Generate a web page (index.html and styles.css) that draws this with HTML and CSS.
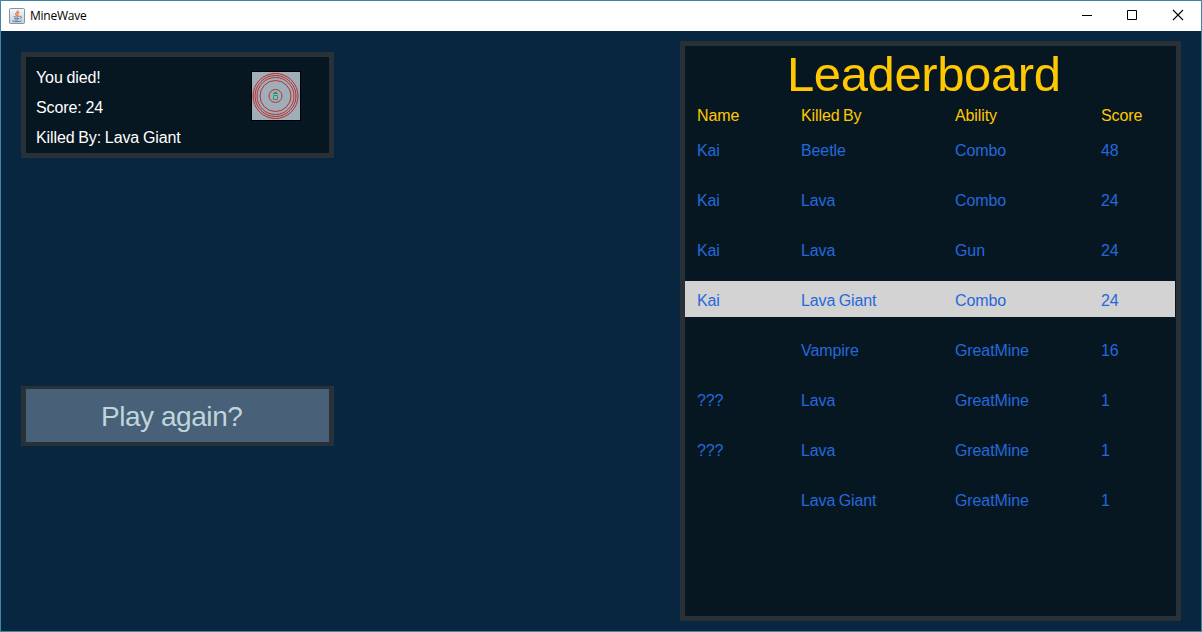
FILE: index.html
```html
<!DOCTYPE html>
<html lang="en">
<head>
<meta charset="utf-8">
<title>MineWave</title>
<link rel="stylesheet" href="styles.css">
</head>
<body>
<div class="window">
  <header class="titlebar">
    <svg class="app-icon" width="16" height="16" viewBox="0 0 16 16">
      <defs><linearGradient id="tile" x1="0" y1="0" x2="0" y2="1"><stop offset="0" stop-color="#f7f9fa"/><stop offset="1" stop-color="#c3d0da"/></linearGradient></defs>
      <rect x=".5" y=".5" width="15" height="15" rx="1" fill="url(#tile)" stroke="#8195a6"/>
      <path d="M8.900 2.200c.8 1.600-2.700 2.300-2.200 4.100.2.7.8 1.100 1 1.700M10.300 4.300c-1.600.6-2.200 1.300-1.300 2.300.4.5 0 1-.4 1.400" fill="none" stroke="#e8792b" stroke-width="1.200"/>
      <path d="M4.600 8.500c1 .7 4.800.7 6 0M5.200 10.300c1.300.6 4 .6 5 0M5.800 11.800c1 .4 2.800.4 3.600 0M3.300 12.700c1.500 1.200 7.500 1.200 9.200 0M11 8.300c2-.3 2 1.900-.1 2.400" fill="none" stroke="#4f7392" stroke-width=".9"/>
    </svg>
    <span class="app-name">MineWave</span>
    <div class="controls">
      <svg width="46" height="29" viewBox="0 0 46 29"><path d="M17 14.500h10" class="glyph"/></svg>
      <svg width="46" height="29" viewBox="0 0 46 29"><path d="M16.500 9.500h9v9h-9z" class="glyph"/></svg>
      <svg width="44" height="29" viewBox="0 0 44 29"><path d="M16 9l10 10M26 9L16 19" class="glyph cross"/></svg>
    </div>
  </header>
  <main class="stage">
    <section class="side">
      <div class="panel result">
        <div class="result-text">
          <p>You died!</p>
          <p>Score: 24</p>
          <p>Killed By: Lava Giant</p>
        </div>
        <svg class="ability" width="50" height="50" viewBox="0 0 50 50">
          <rect x=".5" y=".5" width="49" height="49" fill="#9fafb9" stroke="#000"/>
          <g fill="none" stroke="#bd2c2d">
            <circle cx="24.500" cy="25" r="22.500"/>
            <circle cx="24.500" cy="25" r="20.500"/>
            <circle cx="24.500" cy="25" r="18.500"/>
            <circle cx="24.500" cy="25" r="15.500"/>
            <circle cx="24.500" cy="25" r="6.500"/>
          </g>
          <path d="M22.500 24.500h4v4h-4zM22 22.500h5M23 21.500h3" fill="none" stroke="#2f9468"/>
        </svg>
      </div>
      <button class="play">Play again?</button>
    </section>
    <section class="panel board">
      <h1>Leaderboard</h1>
      <div class="row head"><span>Name</span><span>Killed By</span><span>Ability</span><span>Score</span></div>
      <div class="rows">
        <div class="row"><span>Kai</span><span>Beetle</span><span>Combo</span><span>48</span></div>
        <div class="row"><span>Kai</span><span>Lava</span><span>Combo</span><span>24</span></div>
        <div class="row"><span>Kai</span><span>Lava</span><span>Gun</span><span>24</span></div>
        <div class="row current"><span>Kai</span><span>Lava Giant</span><span>Combo</span><span>24</span></div>
        <div class="row"><span></span><span>Vampire</span><span>GreatMine</span><span>16</span></div>
        <div class="row"><span>???</span><span>Lava</span><span>GreatMine</span><span>1</span></div>
        <div class="row"><span>???</span><span>Lava</span><span>GreatMine</span><span>1</span></div>
        <div class="row"><span></span><span>Lava Giant</span><span>GreatMine</span><span>1</span></div>
      </div>
    </section>
  </main>
</div>
</body>
</html>
```
FILE: styles.css
```css
* { box-sizing: border-box; margin: 0; }
body { font: 16px/30px "Liberation Sans", Arial, sans-serif; overflow: hidden; }
.window {
  display: flex;
  flex-direction: column;
  width: 1202px;
  height: 632px;
  border: 1px solid #3f86a5;
  background: #08263f;
}
.titlebar {
  display: flex;
  align-items: center;
  height: 30px;
  padding-left: 8px;
  background: #fff;
  color: #000;
}
.app-name { margin-left: 5px; font: 12px/28px "Open Sans", "Noto Sans", sans-serif; letter-spacing: -0.25px; }
.controls { display: flex; margin-left: auto; height: 30px; }
.glyph { fill: none; stroke: #000; stroke-width: 1; }
.cross { stroke-width: 1.1; }
.stage {
  display: flex;
  flex: 1;
  justify-content: space-between;
  align-items: flex-start;
  padding: 10px 20px 0;
}
.side { width: 313px; padding-top: 11px; }
.panel { border: 5px solid #293138; border-radius: 1px; background: #071722; }
.result {
  display: flex;
  justify-content: space-between;
  height: 106px;
  padding: 6px 28px 0 10px;
  color: #fff;
  letter-spacing: -0.1px;
  word-spacing: -0.6px;
}
.ability { margin-top: 8px; }
.play {
  display: block;
  width: 313px;
  height: 60px;
  margin-top: 228px;
  padding: 2px 0 0 75px;
  border: solid #293138;
  border-width: 3px 5px 4px;
  border-radius: 0;
  background: #486078;
  color: #bfd5dc;
  font: 28px/51px "Liberation Sans", Arial, sans-serif;
  letter-spacing: -0.45px;
  text-align: left;
}
.board { width: 501px; height: 580px; }
.board h1 {
  height: 56px;
  padding-left: 102px;
  color: #ffc800;
  font-size: 49px;
  font-weight: 400;
  line-height: 56px;
  letter-spacing: -0.4px;
}
.row {
  display: grid;
  grid-template-columns: 104px 154px 146px 1fr;
  width: 490px;
  height: 36px;
  padding-left: 12px;
  line-height: 40px;
  letter-spacing: -0.1px;
  word-spacing: -1px;
}
.head { height: 27px; line-height: 28px; color: #ffc800; }
.rows { display: flex; flex-direction: column; gap: 14px; padding-top: 2px; color: #2469dc; }
.current { background: #d3d3d3; }
```
